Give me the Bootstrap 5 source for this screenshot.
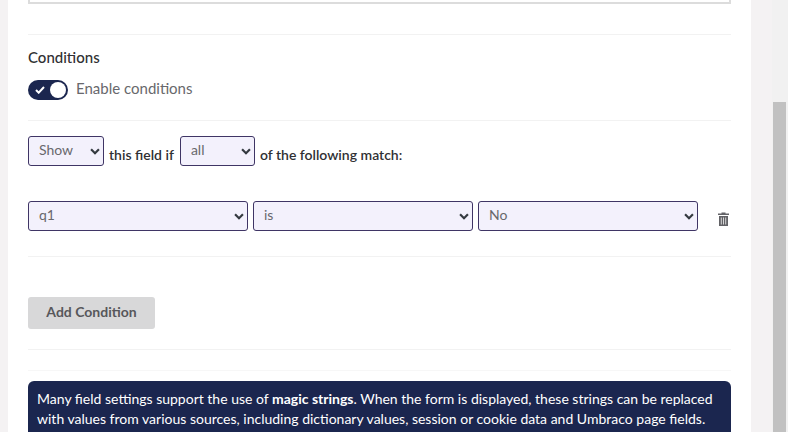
<!DOCTYPE html>
<html lang="en">
<head>
<meta charset="utf-8">
<title>Conditions</title>
<link href="https://cdn.jsdelivr.net/npm/bootstrap@5.3.0/dist/css/bootstrap.min.css" rel="stylesheet">
<style>
html,body{height:432px;overflow:hidden}
body{background:#f4f2f3;font-family:Lato,"Liberation Sans",sans-serif;font-size:15px;color:#303033}
.shell{height:432px}
.panel{width:743px;margin-left:8px;height:432px;overflow:hidden;background:#fff;padding:0 20px}
.gutter{width:21px}
.track{width:16px;background:#f1f1f1;padding:102px 2px 0 1px}
.thumb{height:330px;background:#c1c1c1}
.stub{height:4px;border:2px solid #dcdcdc;border-top:0;background:#fff}
.rule{height:1px;background:#f2f2f2}
.rule-a{margin-top:30px}
.heading{margin-top:12px;line-height:20px;font-size:15px;color:#303033;font-weight:500}
.toggle-row{margin-top:13px;height:20px;gap:8px}
.toggle{width:40px;height:20px;border-radius:10px;background:#1b264f;padding:2px 2px 2px 7px}
.toggle-knob{width:16px;height:16px;border-radius:50%;background:#fff}
.toggle-label{color:#68686c;font-size:15px;line-height:20px;padding-bottom:5px}
.rule-b{margin-top:20px}
.match-row{margin-top:15px;height:30px;gap:5px}
.match-text{font-size:14px;color:#303033;line-height:18px;padding-top:10px;font-weight:600}
.fselect{height:30px;border:1px solid #3f3565;border-radius:3px;background-color:#f3f1fc;color:#68686c;font-size:14px;padding:0 24px 2px 10px;
 background-image:url("data:image/svg+xml,%3csvg xmlns='http://www.w3.org/2000/svg' viewBox='0 0 11 8'%3e%3cpath fill='none' stroke='%23343a40' stroke-width='2.500' d='M1 1.500l4.500 4.500 4.500-4.500'/%3e%3c/svg%3e");
 background-position:right 3px center;background-size:10px 7px;line-height:20px}
.w-show{width:76px}
.w-all{width:75px;margin-left:1px}
.cond-row{margin-top:35px;height:30px;gap:5px}
.w-cond{width:220px}
.trash{width:28px;padding:11px 0 0 15px}
.trash svg{display:block}
.rule-c{margin-top:25px}
.add-btn{margin-top:40px;width:127px;height:32px;background:#d8d8d9;border:0;border-radius:3px;color:#57575b;font-size:14px;font-weight:700;padding:0 0 4px;display:block}
.rule-d{margin-top:20px}
.rule-e{margin-top:20px;background:#f7f7f7}
.note{margin-top:10px;background:#1b264f;border-radius:6px 6px 0 0;color:#fff;font-size:14px;line-height:20px;padding:8px 9px 0;height:60px}
</style>
</head>
<body>
<div class="d-flex shell">
  <main class="panel">
    <div class="stub"></div>
    <div class="rule rule-a"></div>
    <div class="heading">Conditions</div>
    <div class="d-flex align-items-center toggle-row">
      <div class="toggle d-flex align-items-center justify-content-end">
        <svg class="me-auto" width="10" height="8" viewBox="0 0 10 8"><path d="M1 4l2.700 2.700L9 1" fill="none" stroke="#fff" stroke-width="2"/></svg>
        <div class="toggle-knob"></div>
      </div>
      <span class="toggle-label">Enable conditions</span>
    </div>
    <div class="rule rule-b"></div>
    <div class="d-flex match-row">
      <select class="form-select fselect w-show" aria-label="Action"><option>Show</option></select>
      <span class="match-text">this field if</span>
      <select class="form-select fselect w-all" aria-label="Logic"><option>all</option></select>
      <span class="match-text">of the following match:</span>
    </div>
    <div class="d-flex cond-row">
      <select class="form-select fselect w-cond" aria-label="Field"><option>q1</option></select>
      <select class="form-select fselect w-cond" aria-label="Operator"><option>is</option></select>
      <select class="form-select fselect w-cond" aria-label="Value"><option>No</option></select>
      <div class="trash">
        <svg width="11" height="14" viewBox="0 0 11 14"><path d="M3.500 1.500V.5h4v1H11v1.500H0V1.500z" fill="#626266"/><path d="M1 4h9v10H1z" fill="#626266"/><path d="M2.800 5.500h1v7h-1zM5 5.500h1v7H5zM7.200 5.500h1v7h-1z" fill="#d8d8d8"/></svg>
      </div>
    </div>
    <div class="rule rule-c"></div>
    <button type="button" class="btn add-btn">Add Condition</button>
    <div class="rule rule-d"></div>
    <div class="rule rule-e"></div>
    <div class="note">Many field settings support the use of <strong>magic strings</strong>. When the form is displayed, these strings can be replaced with values from various sources, including dictionary values, session or cookie data and Umbraco page fields.</div>
  </main>
  <div class="gutter"></div>
  <div class="track"><div class="thumb"></div></div>
</div>
</body>
</html>
